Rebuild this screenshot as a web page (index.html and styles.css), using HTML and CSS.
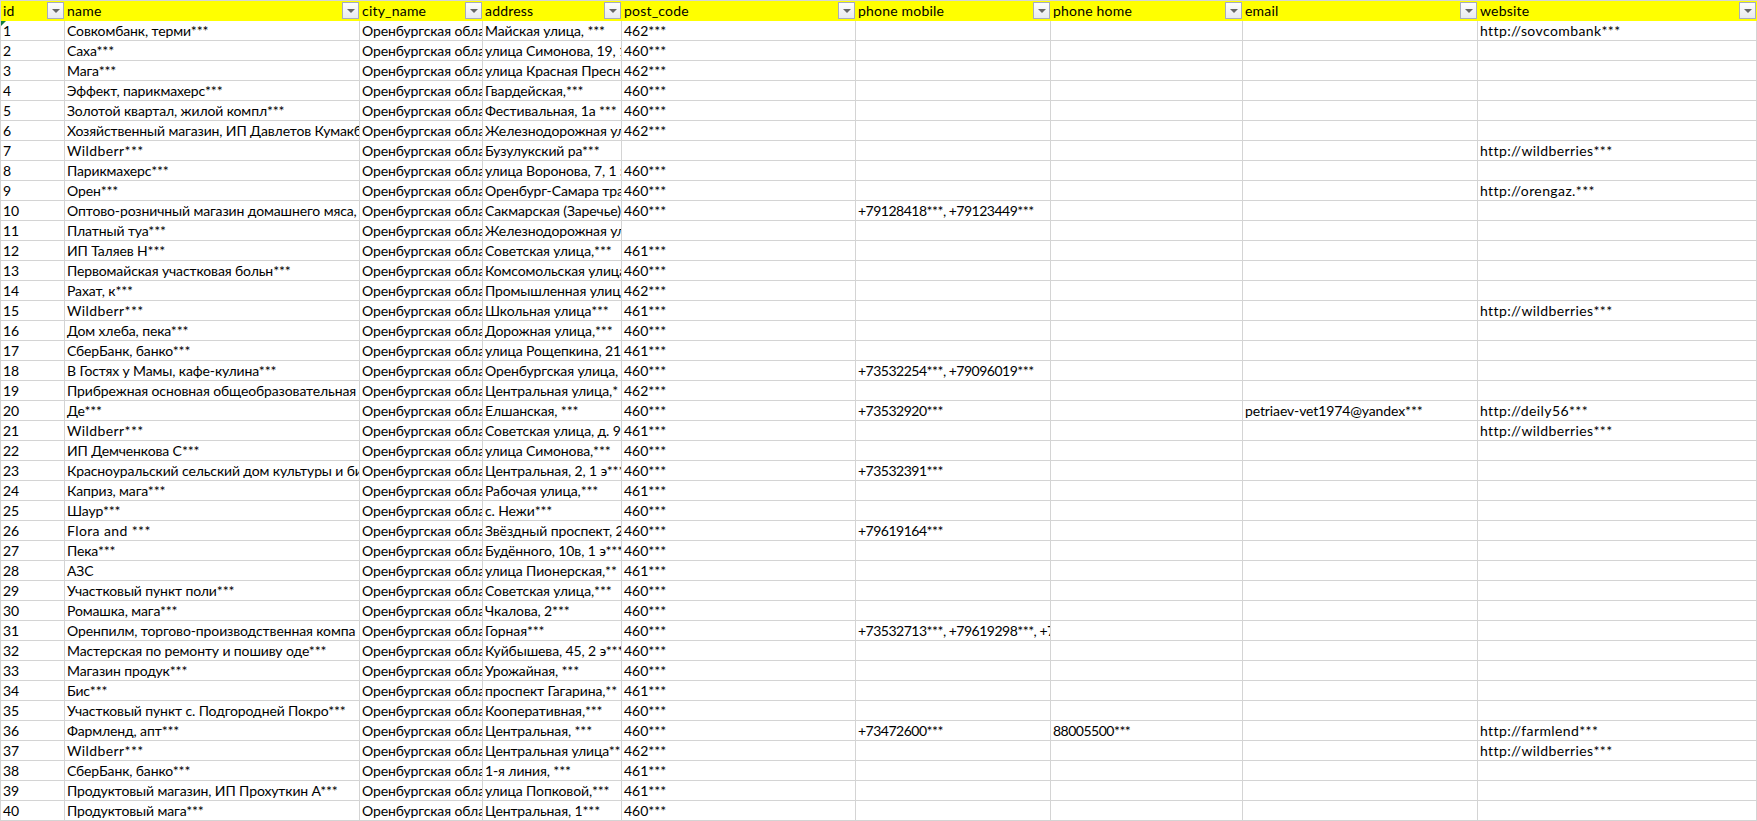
FILE: index.html
```html
<!DOCTYPE html>
<html lang="ru">
<head>
<meta charset="utf-8">
<title>Лист</title>
<link rel="stylesheet" href="styles.css">
</head>
<body>
<table class="sheet">
<colgroup><col class="c-id"><col class="c-name"><col class="c-city"><col class="c-addr"><col class="c-post"><col class="c-mob"><col class="c-home"><col class="c-mail"><col class="c-web"></colgroup>
<thead><tr>
<th><div class="head"><span>id</span><i class="filter"></i></div></th>
<th><div class="head"><span>name</span><i class="filter"></i></div></th>
<th><div class="head"><span>city_name</span><i class="filter"></i></div></th>
<th><div class="head"><span>address</span><i class="filter"></i></div></th>
<th><div class="head"><span>post_code</span><i class="filter"></i></div></th>
<th><div class="head"><span>phone mobile</span><i class="filter"></i></div></th>
<th><div class="head"><span>phone home</span><i class="filter"></i></div></th>
<th><div class="head"><span>email</span><i class="filter"></i></div></th>
<th><div class="head"><span>website</span><i class="filter"></i></div></th>
</tr></thead>
<tbody>
<tr><td class="marked">1</td><td>Совкомбанк, терми***</td><td>Оренбургская обла</td><td>Майская улица, ***</td><td class="num">462***</td><td></td><td></td><td></td><td class="lat">http://sovcombank***</td></tr>
<tr><td>2</td><td>Саха***</td><td>Оренбургская обла</td><td>улица Симонова, 19, 1</td><td class="num">460***</td><td></td><td></td><td></td><td></td></tr>
<tr><td>3</td><td>Мага***</td><td>Оренбургская обла</td><td>улица Красная Пресня</td><td class="num">462***</td><td></td><td></td><td></td><td></td></tr>
<tr><td>4</td><td>Эффект, парикмахерс***</td><td>Оренбургская обла</td><td>Гвардейская,***</td><td class="num">460***</td><td></td><td></td><td></td><td></td></tr>
<tr><td>5</td><td>Золотой квартал, жилой компл***</td><td>Оренбургская обла</td><td>Фестивальная, 1а ***</td><td class="num">460***</td><td></td><td></td><td></td><td></td></tr>
<tr><td>6</td><td>Хозяйственный магазин, ИП Давлетов Кумакб</td><td>Оренбургская обла</td><td>Железнодорожная ул</td><td class="num">462***</td><td></td><td></td><td></td><td></td></tr>
<tr><td>7</td><td class="lat">Wildberr***</td><td>Оренбургская обла</td><td>Бузулукский ра***</td><td></td><td></td><td></td><td></td><td class="lat">http://wildberries***</td></tr>
<tr><td>8</td><td>Парикмахерс***</td><td>Оренбургская обла</td><td>улица Воронова, 7, 1 э</td><td class="num">460***</td><td></td><td></td><td></td><td></td></tr>
<tr><td>9</td><td>Орен***</td><td>Оренбургская обла</td><td>Оренбург-Самара тра</td><td class="num">460***</td><td></td><td></td><td></td><td class="lat">http://orengaz.***</td></tr>
<tr><td>10</td><td>Оптово-розничный магазин домашнего мяса,</td><td>Оренбургская обла</td><td>Сакмарская (Заречье)</td><td class="num">460***</td><td class="phone">+79128418***, +79123449***</td><td></td><td></td><td></td></tr>
<tr><td>11</td><td>Платный туа***</td><td>Оренбургская обла</td><td>Железнодорожная ул</td><td></td><td></td><td></td><td></td><td></td></tr>
<tr><td>12</td><td>ИП Таляев Н***</td><td>Оренбургская обла</td><td>Советская улица,***</td><td class="num">461***</td><td></td><td></td><td></td><td></td></tr>
<tr><td>13</td><td>Первомайская участковая больн***</td><td>Оренбургская обла</td><td>Комсомольская улица</td><td class="num">460***</td><td></td><td></td><td></td><td></td></tr>
<tr><td>14</td><td>Рахат, к***</td><td>Оренбургская обла</td><td>Промышленная улиц</td><td class="num">462***</td><td></td><td></td><td></td><td></td></tr>
<tr><td>15</td><td class="lat">Wildberr***</td><td>Оренбургская обла</td><td>Школьная улица***</td><td class="num">461***</td><td></td><td></td><td></td><td class="lat">http://wildberries***</td></tr>
<tr><td>16</td><td>Дом хлеба, пека***</td><td>Оренбургская обла</td><td>Дорожная улица,***</td><td class="num">460***</td><td></td><td></td><td></td><td></td></tr>
<tr><td>17</td><td>СберБанк, банко***</td><td>Оренбургская обла</td><td>улица Рощепкина, 21</td><td class="num">461***</td><td></td><td></td><td></td><td></td></tr>
<tr><td>18</td><td>В Гостях у Мамы, кафе-кулина***</td><td>Оренбургская обла</td><td>Оренбургская улица,</td><td class="num">460***</td><td class="phone">+73532254***, +79096019***</td><td></td><td></td><td></td></tr>
<tr><td>19</td><td>Прибрежная основная общеобразовательная</td><td>Оренбургская обла</td><td>Центральная улица,*</td><td class="num">462***</td><td></td><td></td><td></td><td></td></tr>
<tr><td>20</td><td>Де***</td><td>Оренбургская обла</td><td>Елшанская, ***</td><td class="num">460***</td><td class="phone">+73532920***</td><td></td><td>petriaev-vet1974@yandex***</td><td class="lat">http://deily56***</td></tr>
<tr><td>21</td><td class="lat">Wildberr***</td><td>Оренбургская обла</td><td>Советская улица, д. 9</td><td class="num">461***</td><td></td><td></td><td></td><td class="lat">http://wildberries***</td></tr>
<tr><td>22</td><td>ИП Демченкова С***</td><td>Оренбургская обла</td><td>улица Симонова,***</td><td class="num">460***</td><td></td><td></td><td></td><td></td></tr>
<tr><td>23</td><td>Красноуральский сельский дом культуры и би</td><td>Оренбургская обла</td><td>Центральная, 2, 1 э***</td><td class="num">460***</td><td class="phone">+73532391***</td><td></td><td></td><td></td></tr>
<tr><td>24</td><td>Каприз, мага***</td><td>Оренбургская обла</td><td>Рабочая улица,***</td><td class="num">461***</td><td></td><td></td><td></td><td></td></tr>
<tr><td>25</td><td>Шаур***</td><td>Оренбургская обла</td><td>с. Нежи***</td><td class="num">460***</td><td></td><td></td><td></td><td></td></tr>
<tr><td>26</td><td class="lat">Flora and ***</td><td>Оренбургская обла</td><td>Звёздный проспект, 2</td><td class="num">460***</td><td class="phone">+79619164***</td><td></td><td></td><td></td></tr>
<tr><td>27</td><td>Пека***</td><td>Оренбургская обла</td><td>Будённого, 10в, 1 э***</td><td class="num">460***</td><td></td><td></td><td></td><td></td></tr>
<tr><td>28</td><td>АЗС</td><td>Оренбургская обла</td><td>улица Пионерская,**</td><td class="num">461***</td><td></td><td></td><td></td><td></td></tr>
<tr><td>29</td><td>Участковый пункт поли***</td><td>Оренбургская обла</td><td>Советская улица,***</td><td class="num">460***</td><td></td><td></td><td></td><td></td></tr>
<tr><td>30</td><td>Ромашка, мага***</td><td>Оренбургская обла</td><td>Чкалова, 2***</td><td class="num">460***</td><td></td><td></td><td></td><td></td></tr>
<tr><td>31</td><td>Оренпилм, торгово-производственная компа</td><td>Оренбургская обла</td><td>Горная***</td><td class="num">460***</td><td class="phone">+73532713***, +79619298***, +7</td><td></td><td></td><td></td></tr>
<tr><td>32</td><td>Мастерская по ремонту и пошиву оде***</td><td>Оренбургская обла</td><td>Куйбышева, 45, 2 э***</td><td class="num">460***</td><td></td><td></td><td></td><td></td></tr>
<tr><td>33</td><td>Магазин продук***</td><td>Оренбургская обла</td><td>Урожайная, ***</td><td class="num">460***</td><td></td><td></td><td></td><td></td></tr>
<tr><td>34</td><td>Бис***</td><td>Оренбургская обла</td><td>проспект Гагарина,**</td><td class="num">461***</td><td></td><td></td><td></td><td></td></tr>
<tr><td>35</td><td>Участковый пункт с. Подгородней Покро***</td><td>Оренбургская обла</td><td>Кооперативная,***</td><td class="num">460***</td><td></td><td></td><td></td><td></td></tr>
<tr><td>36</td><td>Фармленд, апт***</td><td>Оренбургская обла</td><td>Центральная, ***</td><td class="num">460***</td><td class="phone">+73472600***</td><td class="phone">88005500***</td><td></td><td class="lat">http://farmlend***</td></tr>
<tr><td>37</td><td class="lat">Wildberr***</td><td>Оренбургская обла</td><td>Центральная улица**</td><td class="num">462***</td><td></td><td></td><td></td><td class="lat">http://wildberries***</td></tr>
<tr><td>38</td><td>СберБанк, банко***</td><td>Оренбургская обла</td><td>1-я линия, ***</td><td class="num">461***</td><td></td><td></td><td></td><td></td></tr>
<tr><td>39</td><td>Продуктовый магазин, ИП Прохуткин А***</td><td>Оренбургская обла</td><td>улица Попковой,***</td><td class="num">461***</td><td></td><td></td><td></td><td></td></tr>
<tr><td>40</td><td>Продуктовый мага***</td><td>Оренбургская обла</td><td>Центральная, 1***</td><td class="num">460***</td><td></td><td></td><td></td><td></td></tr>
</tbody>
</table>
</body>
</html>
```
FILE: styles.css
```css
html, body {
  margin: 0;
  padding: 0;
  background: #fff;
  overflow: hidden;
}
.sheet {
  table-layout: fixed;
  width: 1757px;
  border-collapse: separate;
  border-spacing: 0;
  border-left: 1px solid #d4d4d4;
  border-top: 1px solid #d4d4d4;
  font-family: Lato, "Liberation Sans", sans-serif;
  font-size: 14px;
  color: #000;
}
.c-id { width: 64px; }
.c-name { width: 295px; }
.c-city { width: 123px; }
.c-addr { width: 139px; }
.c-post { width: 234px; }
.c-mob { width: 195px; }
.c-home { width: 192px; }
.c-mail { width: 235px; }
.c-web { width: 279px; }
th, td {
  height: 20px;
  box-sizing: border-box;
  border-right: 1px solid #d4d4d4;
  border-bottom: 1px solid #d4d4d4;
  font-weight: 400;
  text-align: left;
}
th {
  padding: 0;
  background: #ffff00;
  border-right-color: #ffff00;
  border-bottom-color: #ffff00;
}
td {
  padding: 0 0 0 2px;
  line-height: 19px;
  white-space: nowrap;
  overflow: hidden;
  letter-spacing: -0.12px;
}
td.lat {
  letter-spacing: 0.4px;
}
td.phone {
  letter-spacing: -0.5px;
}
td.num {
  letter-spacing: 0;
}
.head {
  display: flex;
  align-items: center;
  justify-content: space-between;
  height: 19px;
  padding-left: 2px;
  letter-spacing: 0.2px;
}
.filter {
  display: flex;
  align-items: center;
  justify-content: center;
  box-sizing: border-box;
  width: 17px;
  height: 17px;
  border: 1px solid #a6acbd;
  background: linear-gradient(#fdfdfd, #e8eaee);
}
.filter::after {
  content: "";
  border-left: 4px solid transparent;
  border-right: 4px solid transparent;
  border-top: 4px solid #666;
}
.marked {
  position: relative;
}
.marked::before {
  content: "";
  position: absolute;
  left: 0;
  top: 0;
  border-top: 5px solid #107c41;
  border-right: 5px solid transparent;
}
```
